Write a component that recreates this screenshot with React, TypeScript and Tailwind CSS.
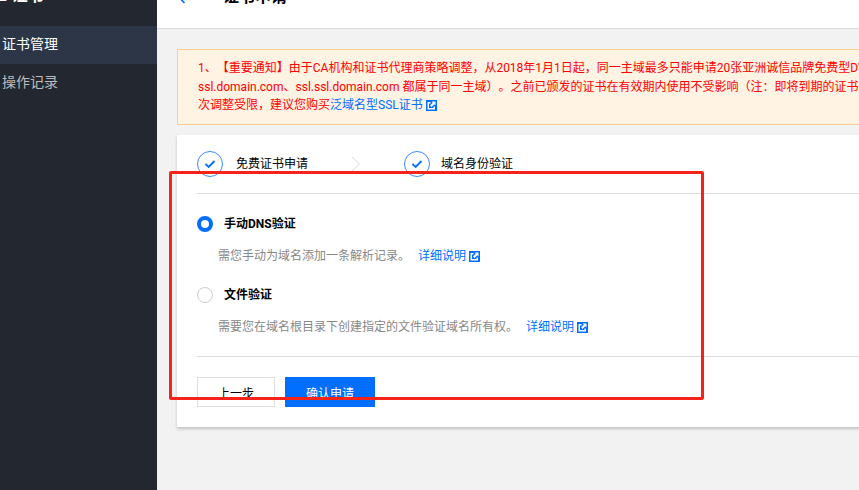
const cjk = 'font-["Roboto","Noto_Sans_CJK_SC",sans-serif] [text-spacing-trim:space-all]';

function ExternalIcon() {
  return (
    <svg width="11" height="11" viewBox="0 0 11 11" className="shrink-0">
      <path d="M0 0H11V11H0Z" fill="#006eff" />
      <path d="M1.5 2H4.5V3.5H3V8H7.5V6.5H9V9.5H1.5Z" fill="#fff" />
      <path d="M5.5 1.5H9.5V5.5L8.3 4.3L5.5 7.1L4 5.6L6.8 2.8Z" fill="#fff" />
    </svg>
  );
}

function StepCheck() {
  return (
    <span className="flex h-[26px] w-[26px] items-center justify-center rounded-full border border-[#3d8bff]">
      <svg width="12" height="10" viewBox="0 0 12 10" fill="none">
        <path d="M1.5 5L4.7 8L10.5 2" stroke="#006eff" strokeWidth="1.8" />
      </svg>
    </span>
  );
}

function Option({ checked, title, desc }: { checked: boolean; title: string; desc: string }) {
  return (
    <div>
      <div className="flex h-[18px] items-center">
        {checked ? (
          <span className="h-4 w-4 rounded-full border-[4px] border-[#006eff] bg-white" />
        ) : (
          <span className="h-4 w-4 rounded-full border border-[#ccc] bg-white" />
        )}
        <span className="ml-[11px] text-xs font-bold text-black">{title}</span>
      </div>
      <div className="mt-[14px] flex h-[18px] items-center pl-[21px] text-xs text-[#888]">
        <span>{desc}</span>
        <a className="ml-2 flex items-center text-[#006eff]">
          详细说明
          <span className="ml-[3px]"><ExternalIcon /></span>
        </a>
      </div>
    </div>
  );
}

export default function App() {
  return (
    <div className={`relative flex h-[490px] w-[859px] overflow-hidden bg-[#f2f2f2] ${cjk}`}>
      <aside className="w-[157px] shrink-0 bg-[#23272f]">
        <div className="-mt-[16px] flex h-[42px] text-base font-bold text-white">
          <span className="-ml-[2px] mr-[5px]">L</span>
          <span>证书</span>
        </div>
        <div className="flex h-[38px] items-center bg-[#2c3646] pb-[2px] pl-[2px] text-sm text-white">证书管理</div>
        <div className="flex h-[38px] items-center pb-[2px] pl-[2px] text-sm text-[#bbb]">操作记录</div>
      </aside>

      <main className="min-w-0 flex-1">
        <header className="-mt-[34px] flex h-[63px] items-center border-b border-[#ddd] bg-white pl-5 text-base font-bold text-black">
          <svg width="9" height="14" viewBox="0 0 9 14" fill="none">
            <path d="M7.5 1L1.5 7L7.5 13" stroke="#006eff" strokeWidth="1.6" />
          </svg>
          <span className="ml-[37px]">证书申请</span>
        </header>

        <div className="w-[900px] pl-5 pt-5">
          <div className="h-[76px] border border-[#ffcd8c] bg-[#fff3e3] pl-5 pt-[9px] text-xs leading-[18.5px] text-[#f00] whitespace-nowrap">
            <p>1、【重要通知】由于CA机构和证书代理商策略调整，从2018年1月1日起，同一主域最多只能申请20张亚洲诚信品牌免费型DV</p>
            <p>ssl.domain.com、ssl.ssl.domain.com 都属于同一主域）。之前已颁发的证书在有效期内使用不受影响（注：即将到期的证书</p>
            <p className="flex items-center">
              次调整受限，建议您购买<a className="text-[#006eff]">泛域名型SSL证书</a>
              <span className="ml-[3px]"><ExternalIcon /></span>
            </p>
          </div>

          <section className="mt-[10px] h-[292px] bg-white pl-5 pt-[16px] shadow-[0_2px_3px_rgba(0,0,0,0.2)]">
            <div className="flex h-[43px] items-start border-b border-[#ddd] text-xs text-black">
              <div className="flex items-center">
                <StepCheck />
                <span className="ml-[13px]">免费证书申请</span>
              </div>
              <svg width="10" height="16" viewBox="0 0 10 16" fill="none" className="ml-[43px] mt-[5px]">
                <path d="M1 1L8.5 8L1 15" stroke="#ddd" />
              </svg>
              <div className="ml-[43px] flex items-center">
                <StepCheck />
                <span className="ml-[11px]">域名身份验证</span>
              </div>
            </div>

            <div className="mt-[21px] flex flex-col gap-[21px]">
              <Option checked title="手动DNS验证" desc="需您手动为域名添加一条解析记录。" />
              <Option checked={false} title="文件验证" desc="需要您在域名根目录下创建指定的文件验证域名所有权。" />
            </div>

            <div className="mt-5 border-t border-[#ddd] pt-5">
              <div className="flex gap-[10px]">
                <button className="h-[30px] w-[78px] border border-[#ddd] bg-white pt-[3px] text-xs text-black">上一步</button>
                <button className="h-[30px] w-[90px] bg-[#006eff] pt-[3px] text-xs text-white">确认申请</button>
              </div>
            </div>
          </section>
        </div>
      </main>

      <div className="pointer-events-none absolute left-[169px] top-[171px] h-[229px] w-[535px] rounded-[2px] border-[3px] border-[#f5231a]" />
    </div>
  );
}
